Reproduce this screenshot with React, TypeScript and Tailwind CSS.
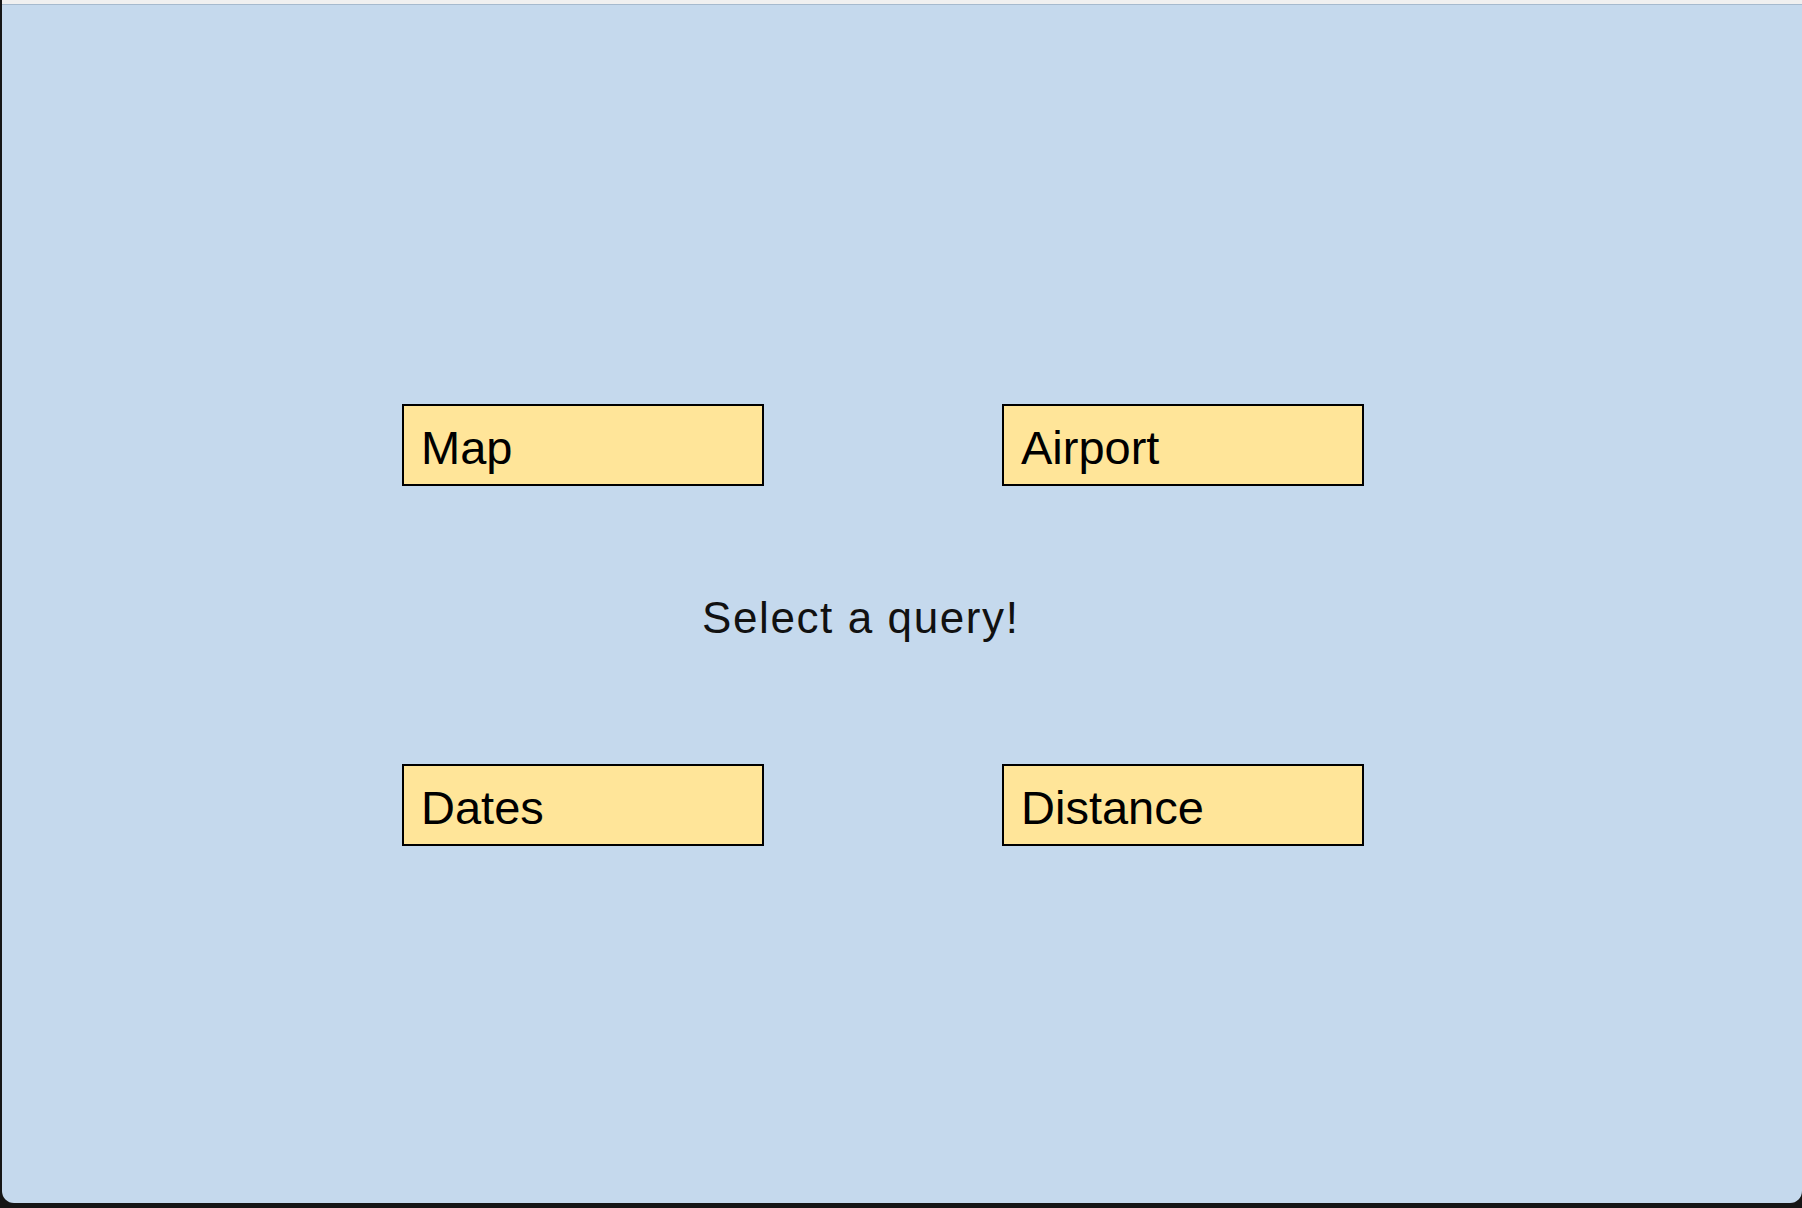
const buttonClass =
  "w-[362px] h-[82px] border-2 border-black bg-[#ffe599] pl-[17px] pt-[18px] text-[47px] leading-[47px] text-black cursor-pointer";

function QueryButton({ label }: { label: string }) {
  return (
    <div role="button" className={buttonClass}>
      {label}
    </div>
  );
}

export default function App() {
  return (
    <div
      className="w-[1802px] h-[1208px] flex flex-col bg-[#161616] pb-[5px]"
      style={{ fontFamily: '"Liberation Sans", Arial, sans-serif' }}
    >
      <div className="h-[4px] ml-[2px] bg-[#f0f0f0]" />
      <div className="flex-1 ml-[2px] bg-[#c5d9ed] border-t border-[#a6bace] rounded-b-[12px] pl-[400px] pt-[399px]">
        <div className="flex gap-[238px]">
          <QueryButton label="Map" />
          <QueryButton label="Airport" />
        </div>
        <p className="mt-[110px] ml-[300px] text-[44px] leading-[44px] tracking-[1.6px] text-[#111]">
          Select a query!
        </p>
        <div className="mt-[124px] flex gap-[238px]">
          <QueryButton label="Dates" />
          <QueryButton label="Distance" />
        </div>
      </div>
    </div>
  );
}
